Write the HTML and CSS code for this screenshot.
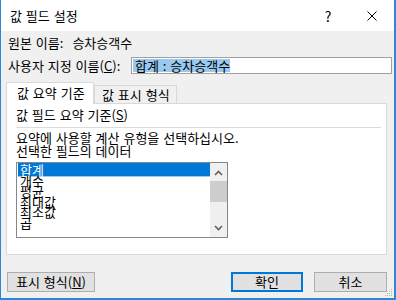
FILE: index.html
```html
<!doctype html>
<html>
<head>
<meta charset="utf-8">
<title>값 필드 설정</title>
<link rel="stylesheet" href="styles.css">
</head>
<body>
<div class="dialog">
	<div class="titlebar">
		<span class="title">값 필드 설정</span>
		<span class="help">?</span>
		<svg class="close" width="10" height="10" viewBox="0 0 10 10"><path d="M0.5 0.5L9.5 9.5M9.5 0.5L0.5 9.5" stroke="#000" stroke-width="1"/></svg>
	</div>
	<div class="body">
		<div class="source">원본 이름:<span class="sourceName">승차승객수</span></div>
		<div class="customName">
			<span>사용자 지정 이름(<u>C</u>):</span>
			<div class="textbox"><span class="selection">합계 : 승차승객수</span></div>
		</div>
		<div class="tabs">
			<div class="tab active">값 요약 기준</div>
			<div class="tab">값 표시 형식</div>
		</div>
		<div class="panel">
			<div class="groupTitle">값 필드 요약 기준(<u>S</u>)</div>
			<div class="rule"></div>
			<div class="hint">요약에 사용할 계산 유형을 선택하십시오.<br>선택한 필드의 데이터</div>
			<div class="listbox">
				<ul class="items">
					<li class="selected">합계</li>
					<li>개수</li>
					<li>평균</li>
					<li>최대값</li>
					<li>최소값</li>
					<li>곱</li>
				</ul>
				<div class="scrollbar">
					<div class="arrow up"><svg width="17" height="17" viewBox="0 0 17 17"><path d="M5 12L8.5 8.5L12 12" fill="none" stroke="#606060" stroke-width="1.6"/></svg></div>
					<div class="thumb"></div>
					<div class="track"></div>
					<div class="arrow down"><svg width="17" height="17" viewBox="0 0 17 17"><path d="M5 6L8.5 9.5L12 6" fill="none" stroke="#606060" stroke-width="1.6"/></svg></div>
				</div>
			</div>
		</div>
		<div class="buttons">
			<div class="button format">표시 형식(<u>N</u>)</div>
			<div class="button ok">확인</div>
			<div class="button cancel">취소</div>
		</div>
	</div>
	<svg class="grip" width="8" height="8" viewBox="0 0 8 8">
		<rect x="6" y="0" width="1" height="1" fill="#b5b5b5"/>
		<rect x="4" y="2" width="1" height="1" fill="#b5b5b5"/>
		<rect x="6" y="2" width="1" height="1" fill="#b5b5b5"/>
		<rect x="2" y="4" width="1" height="1" fill="#b5b5b5"/>
		<rect x="4" y="4" width="1" height="1" fill="#b5b5b5"/>
		<rect x="6" y="4" width="1" height="1" fill="#b5b5b5"/>
		<rect x="0" y="6" width="1" height="1" fill="#b5b5b5"/>
		<rect x="2" y="6" width="1" height="1" fill="#b5b5b5"/>
		<rect x="4" y="6" width="1" height="1" fill="#b5b5b5"/>
		<rect x="6" y="6" width="1" height="1" fill="#b5b5b5"/>
	</svg>
</div>
</body>
</html>
```

FILE: styles.css
```css
* {
	box-sizing: border-box;
}

body {
	margin: 0;
	background-color: #ffffff;
	font-family: "Noto Sans CJK KR", "Noto Sans", sans-serif;
	font-size: 13px;
	word-spacing: 1px;
	color: #000000;
}

.dialog {
	position: relative;
	display: flex;
	flex-direction: column;
	width: 396px;
	height: 300px;
	border-left: 1px solid #2b88d8;
	border-right: 2px solid #2b88d8;
	border-bottom: 2px solid #2b88d8;
	background-color: #f0f0f0;
}

.titlebar {
	display: flex;
	align-items: center;
	height: 31px;
	padding-left: 9px;
	background-color: #ffffff;
}

.title {
	flex: 1;
	line-height: 16px;
}

.help {
	width: 14px;
	margin-right: 32px;
	font-size: 14px;
	text-align: center;
}

.close {
	margin-right: 17px;
}

.body {
	display: flex;
	flex-direction: column;
	flex: 1;
}

.source {
	margin: 4px 0 0 7px;
	line-height: 16px;
}

.sourceName {
	margin-left: 9px;
}

.customName {
	display: flex;
	align-items: center;
	height: 17px;
	margin: 6px 2px 0 7px;
}

.textbox {
	display: flex;
	align-items: center;
	width: 261px;
	height: 17px;
	margin-left: auto;
	padding-left: 1px;
	border: 1px solid #a0a0a0;
	background-color: #ffffff;
}

.selection {
	padding: 0 0 0 2px;
	line-height: 13px;
	background-color: #99c9ef;
}

.tabs {
	display: flex;
	align-items: flex-end;
	height: 21px;
	margin: 8px 0 0 5px;
}

.tab {
	position: relative;
	height: 18px;
	width: 83px;
	padding-left: 7px;
	line-height: 17px;
	border: 1px solid #d9d9d9;
	border-bottom: none;
	background-color: #f0f0f0;
}

.tab.active {
	z-index: 1;
	width: 88px;
	height: 22px;
	margin-bottom: -1px;
	padding-left: 10px;
	line-height: 20px;
	background-color: #ffffff;
}

.panel {
	height: 152px;
	margin: 0 7px 0 5px;
	padding: 3px 5px 0 9px;
	border: 1px solid #d9d9d9;
	background-color: #ffffff;
}

.groupTitle {
	line-height: 16px;
}

.rule {
	height: 1px;
	margin-top: 4px;
	background-color: #dcdcdc;
}

.hint {
	margin-top: 3px;
	line-height: 13px;
}

.listbox {
	display: flex;
	width: 212px;
	height: 76px;
	margin-top: 5px;
	border: 1px solid #828790;
}

.items {
	flex: 1;
	margin: 0;
	padding: 0 0 0 1px;
	list-style: none;
	overflow: hidden;
}

.items li {
	height: 10.6px;
	padding-left: 2px;
	line-height: 13px;
	white-space: nowrap;
}

.items li.selected {
	color: #ffffff;
	background-color: #0078d7;
	box-shadow: 0 2.4px 0 #0078d7;
}

.scrollbar {
	display: flex;
	flex-direction: column;
	width: 17px;
	background-color: #f0f0f0;
}

.arrow {
	height: 17px;
}

.arrow svg {
	display: block;
}

.arrow.up {
	height: 18px;
}

.thumb {
	height: 21px;
	background-color: #cdcdcd;
}

.track {
	flex: 1;
}

.buttons {
	display: flex;
	margin-top: 17px;
	padding: 0 7px 0 6px;
}

.button {
	height: 20px;
	line-height: 18px;
	text-align: center;
	border: 1px solid #adadad;
	background-color: #e1e1e1;
}

.button.format {
	width: 88px;
}

.button.ok {
	width: 72px;
	margin-left: auto;
	line-height: 16px;
	border: 2px solid #0078d7;
}

.button.cancel {
	width: 73px;
	margin-left: 11px;
}

.grip {
	position: absolute;
	right: 1px;
	bottom: 1px;
}
```
